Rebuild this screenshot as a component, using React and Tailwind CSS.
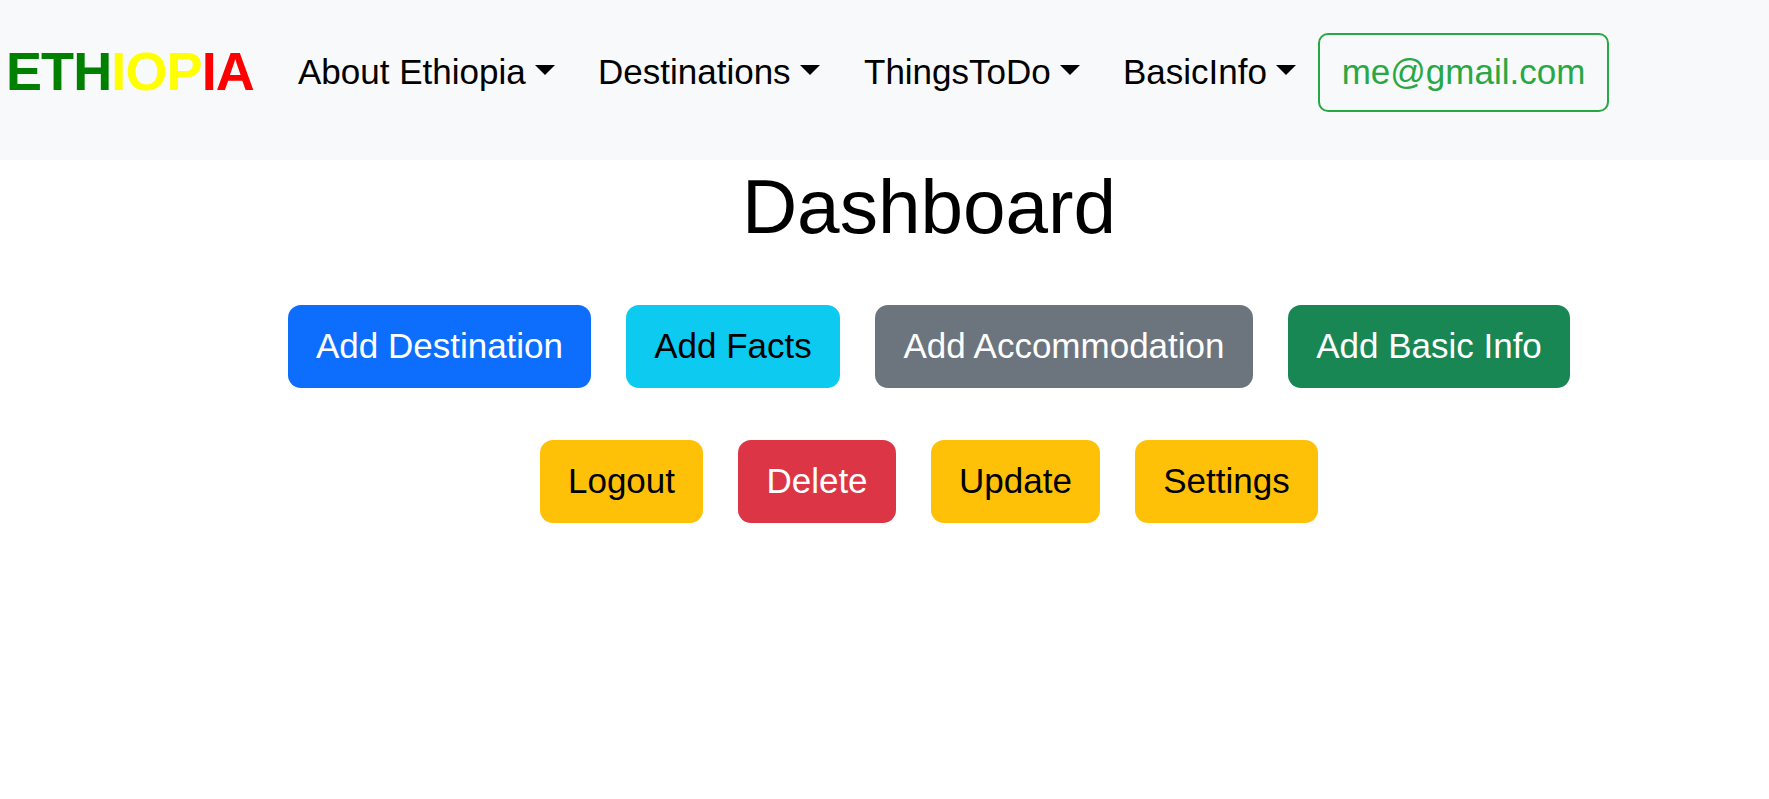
const menus = [
  { label: 'About Ethiopia', width: 'w-[300px]' },
  { label: 'Destinations', width: 'w-[266px]' },
  { label: 'ThingsToDo', width: 'w-[259px]' },
  { label: 'BasicInfo', width: 'w-[195px]' },
];

const addActions = [
  { label: 'Add Destination', style: 'w-[303px] bg-[#0d6efd] text-white' },
  { label: 'Add Facts', style: 'w-[214px] bg-[#0dcaf0] text-black' },
  { label: 'Add Accommodation', style: 'w-[378px] bg-[#6c757d] text-white' },
  { label: 'Add Basic Info', style: 'w-[282px] bg-[#198754] text-white' },
];

const accountActions = [
  { label: 'Logout', style: 'w-[163px] bg-[#ffc107] text-black' },
  { label: 'Delete', style: 'w-[158px] bg-[#dc3545] text-white' },
  { label: 'Update', style: 'w-[169px] bg-[#ffc107] text-black' },
  { label: 'Settings', style: 'w-[183px] bg-[#ffc107] text-black' },
];

function Menu({ label, width }) {
  return (
    <button className={`flex shrink-0 items-center whitespace-nowrap pb-0.5 text-black ${width}`}>
      <span>{label}</span>
      <svg className="mb-1 ml-[9px] h-[10px] w-5" viewBox="0 0 20 10" fill="currentColor">
        <path d="M0 0H20L10 10Z" />
      </svg>
    </button>
  );
}

function ActionRow({ actions }) {
  return (
    <div className="flex justify-center gap-[35px]">
      {actions.map(({ label, style }) => (
        <button
          key={label}
          className={`flex h-[83px] shrink-0 items-center justify-center whitespace-nowrap rounded-[13px] pb-0.5 ${style}`}
        >
          {label}
        </button>
      ))}
    </div>
  );
}

export default function App() {
  return (
    <div className="h-screen overflow-hidden bg-white font-['Liberation_Sans',Arial,sans-serif] text-[35px] leading-[52px] text-black">
      <nav className="flex h-40 items-start bg-[#f8f9fa] pt-[33px]">
        <div className="flex h-[79px] items-center">
          <a className="w-[298px] shrink-0 pb-1 pl-[6px] text-[54px] font-bold tracking-[-0.9px]">
            <span className="text-[#008000]">ETH</span>
            <span className="text-[#ffff00]">IOP</span>
            <span className="text-[#ff0000]">IA</span>
          </a>
          {menus.map((menu) => (
            <Menu key={menu.label} {...menu} />
          ))}
          <button className="flex h-[79px] w-[291px] shrink-0 items-center justify-center rounded-[10px] border-2 border-[#28a745] pb-0.5 text-[#28a745]">
            me@gmail.com
          </button>
        </div>
      </nav>
      <main className="pl-[89px]">
        <h1 className="pt-px text-center text-[76.5px] leading-[92px]">Dashboard</h1>
        <div className="mt-[52px] flex flex-col gap-[52px]">
          <ActionRow actions={addActions} />
          <ActionRow actions={accountActions} />
        </div>
      </main>
    </div>
  );
}
